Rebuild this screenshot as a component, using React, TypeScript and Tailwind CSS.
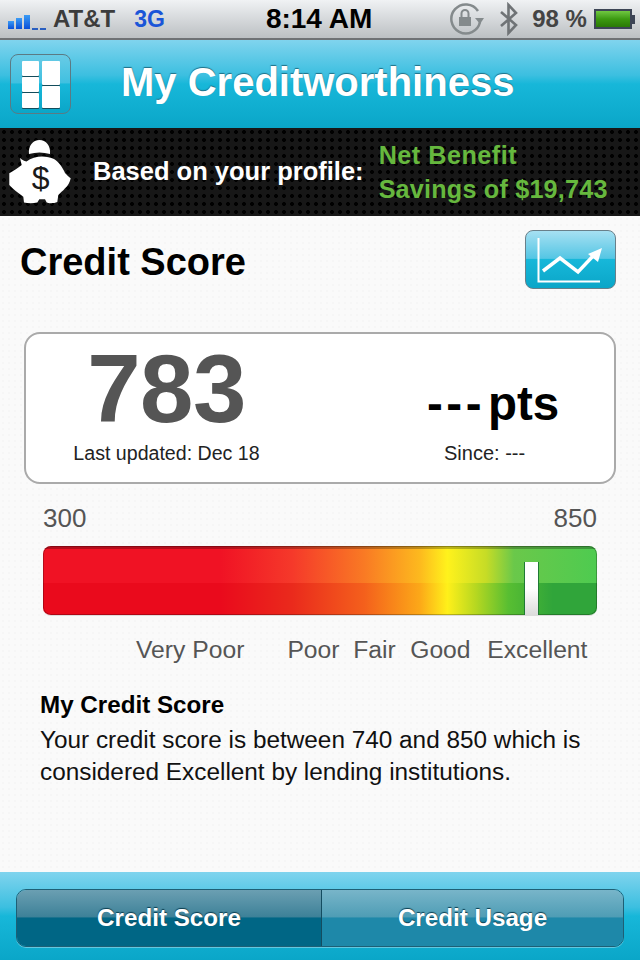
import React from "react";

const Pig = () => (
  <svg width="66" height="72" viewBox="0 0 66 72" className="shrink-0">
    <path d="M21 22 C20 14 25 8 31.500 8 C38 8 43 14 42 22 C35 20 28 20 21 22 Z" fill="#fff" />
    <path d="M12 26 C14 28 16 29 18.500 29.500 C26 23.500 38 23 46 27 C51 30 55 36 57 41 C59 43 61 45 62.700 46.300 C62 50 60 54 57 56.300 C55 59 52 61 50.300 63 L49.300 70 C46 71.500 41 71.500 38.700 70.500 L37 67.300 L31.300 67.300 L29.300 70.500 C25 71.500 20 71.500 16 70.500 L15.300 64.700 C10 61 5 57 1.300 53 L1.300 41.300 C5 39 10 36 13.700 33 Z" fill="#fff" />
    <text x="32.700" y="57" textAnchor="middle" fontSize="32" fontFamily="Liberation Sans, sans-serif" fill="#1a1a1a">$</text>
  </svg>
);

export default function App() {
  return (
    <div className="w-[640px] h-[960px] flex flex-col overflow-hidden font-['Liberation_Sans',Arial,sans-serif] bg-[#f9f9f9]">
      {/* Status bar */}
      <div className="h-[40px] shrink-0 flex items-center bg-gradient-to-b from-[#f0f2f4] to-[#bcc0c3] border-b-2 border-[#6f7275] pl-2 pr-1 text-[#3c3c3c] relative">
        <svg width="40" height="22" viewBox="0 0 40 22" className="shrink-0">
          <defs>
            <linearGradient id="sig" x1="0" y1="0" x2="0" y2="1">
              <stop offset="0" stopColor="#3b9cf5" />
              <stop offset="1" stopColor="#0a4fd8" />
            </linearGradient>
          </defs>
          <rect x="0" y="13" width="6" height="8" fill="url(#sig)" />
          <rect x="8" y="10" width="6" height="11" fill="url(#sig)" />
          <rect x="16" y="7" width="6" height="14" fill="url(#sig)" />
          <rect x="24" y="20" width="6" height="2" fill="#2a5fc0" />
          <rect x="32" y="20" width="6" height="2" fill="#2a5fc0" />
        </svg>
        <span className="ml-[5px] text-[24px] font-bold leading-none">AT&amp;T</span>
        <span className="ml-[19px] text-[23px] font-bold leading-none text-[#1a55d8]">3G</span>
        <span className="ml-[101px] text-[28px] font-bold leading-none text-black">8:14 AM</span>
        <svg width="36" height="34" viewBox="0 0 36 34" className="ml-[77px] shrink-0" fill="none">
          <path d="M29 9 A14.5 14.5 0 1 0 31 20" stroke="#848a8c" strokeWidth="2.5" />
          <path d="M26 16 L35 16 L31 22 Z" fill="#848a8c" />
          <rect x="10" y="15" width="12" height="9" fill="#848a8c" />
          <path d="M12.500 15 V11.500 a3.500 3.500 0 0 1 7 0 V15" stroke="#848a8c" strokeWidth="2" />
        </svg>
        <svg width="20" height="34" viewBox="0 0 20 34" className="ml-[14px] shrink-0" fill="none">
          <path d="M2 10 L17 23 L9.500 31 V3 L17 11 L2 24" stroke="#6f7376" strokeWidth="2.600" />
        </svg>
        <span className="ml-[13px] text-[24px] font-bold leading-none text-[#444]">98 %</span>
        <div className="ml-[7px] w-[38px] h-[20px] border-2 border-[#3d4556] bg-gradient-to-b from-[#70c840] via-[#3c9a10] to-[#2a7a06] shrink-0" />
        <div className="w-[3px] h-[9px] bg-[#3d4556] shrink-0" />
      </div>

      {/* Nav */}
      <div className="h-[88px] shrink-0 flex items-center bg-[linear-gradient(#80d4ee_0%,#3cbfe0_40%,#17b7d9_50%,#0aa6c8_100%)] pl-[10px]">
        <div className="w-[61px] h-[60px] rounded-[8px] border border-[#5b7a84] flex gap-[3px] items-center justify-center bg-[linear-gradient(#68cbe6_0%,#40c0e0_48%,#17b7d9_50%,#0aa6c8_100%)]">
          <div className="flex flex-col gap-[1px]">
            <div className="w-[17px] h-[15px] bg-white rounded-[1px] shadow-[0_1px_0_#134d5c]" />
            <div className="w-[17px] h-[15px] bg-white rounded-[1px] shadow-[0_1px_0_#134d5c]" />
            <div className="w-[17px] h-[15px] bg-white rounded-[1px] shadow-[0_1px_0_#134d5c]" />
          </div>
          <div className="flex flex-col gap-[1px]">
            <div className="w-[18px] h-[24px] bg-white rounded-[1px] shadow-[0_1px_0_#134d5c]" />
            <div className="w-[18px] h-[22px] bg-white rounded-[1px] shadow-[0_1px_0_#134d5c]" />
          </div>
        </div>
        <div className="ml-[50px] text-[40px] font-bold text-white leading-none -mt-[4px] [text-shadow:0_-1px_1px_#1f6e85]">My Creditworthiness</div>
      </div>

      {/* Banner */}
      <div className="h-[88px] shrink-0 flex items-center pl-[8px] bg-[#171717] bg-[radial-gradient(circle_at_center,#000_1.8px,transparent_2.2px)] bg-[length:8px_8px]">
        <div className="-mt-[8px]"><Pig /></div>
        <span className="ml-[19px] text-[25.5px] font-bold text-white leading-none">Based on your profile:</span>
        <div className="ml-[15px] text-[25.2px] font-bold text-[#66b83e] leading-[34px] tracking-[0.2px]">
          <div className="tracking-[0.5px]">Net Benefit</div>
          <div>Savings of $19,743</div>
        </div>
      </div>

      {/* Content */}
      <div className="flex-1 flex flex-col bg-[#fafafa] bg-[radial-gradient(#f6f6f6_0.8px,transparent_1px)] bg-[length:6px_6px]">
        <div className="flex items-start justify-between pl-[20px] pr-[24px] pt-[14px]">
          <h1 className="text-[38px] font-bold text-black leading-none mt-[13px]">Credit Score</h1>
          <div className="w-[91px] h-[59px] rounded-[8px] border border-[#69808a] bg-[linear-gradient(#a6e0f2_0%,#55c6e4_48%,#17b7d9_50%,#0aa6c8_100%)]">
            <svg width="89" height="57" viewBox="0 0 89 57" fill="none">
              <path d="M12.500 7 V50.500 H74" stroke="#fff" strokeWidth="2" />
              <path d="M17 40 L34 27 L52 41 L68 24" stroke="#fff" strokeWidth="3.500" />
              <path d="M76 17 L62 23 L72 31 Z" fill="#fff" />
            </svg>
          </div>
        </div>

        <div className="mx-[24px] mt-[43px] h-[152px] rounded-[16px] border-2 border-[#aaa] bg-white flex">
          <div className="w-[281px] flex flex-col items-center">
            <div className="text-[96px] font-bold text-[#555] leading-none mt-[7px] tracking-[-0.5px]">783</div>
            <div className="text-[19.6px] text-[#222] leading-none mt-[7px]">Last updated: Dec 18</div>
          </div>
          <div className="flex-1 flex flex-col items-start pl-[120px]">
            <div className="text-[47.5px] font-bold text-black leading-none mt-[46px]">
              <span className="tracking-[3.5px]">---</span>
              <span className="ml-[3px]">pts</span>
            </div>
            <div className="text-[20px] text-[#222] leading-none mt-[15px] ml-[17px]">Since: ---</div>
          </div>
        </div>

        <div className="flex justify-between mx-[43px] mt-[21px] text-[26px] leading-none text-[#555]">
          <span>300</span>
          <span>850</span>
        </div>

        <div className="mx-[43px] mt-[15px] h-[70px] relative rounded-[8px] overflow-hidden flex flex-col border-b border-[#ddd]">
          <div className="h-[37px] bg-[linear-gradient(90deg,#f01224_0%,#f01224_32%,#f5392a_45%,#f97a24_58%,#fdb91e_68%,#fff21c_73%,#c6dc26_80%,#6ac84a_85%,#4ecb50_100%)]" />
          <div className="flex-1 bg-[linear-gradient(90deg,#ea0a1c_0%,#ea0a1c_32%,#ea2a1c_45%,#f4601c_58%,#fca818_68%,#fff01a_73%,#b8d820_78%,#58be32_84%,#30a53a_92%,#30a53a_100%)]" />
          <div className="absolute inset-0 rounded-[8px] shadow-[inset_0_0_0_1px_rgba(0,0,0,0.25)]" />
          <div className="absolute inset-x-0 top-0 h-[3px] bg-black/25" />
          <div className="absolute left-[481px] top-[16px] bottom-0 w-[15px] border-x border-[#1f7a35] bg-gradient-to-b from-white via-white to-[#dcdcdc]" />
        </div>

        <div className="flex mt-[22px] text-[24.7px] leading-none text-[#555] pl-[136px]">
          <span>Very Poor</span>
          <span className="ml-[43px]">Poor</span>
          <span className="ml-[13.6px]">Fair</span>
          <span className="ml-[14.5px]">Good</span>
          <span className="ml-[16.7px]">Excellent</span>
        </div>

        <div className="mx-[40px] mt-[30px]">
          <div className="text-[24.2px] font-bold text-black leading-none">My Credit Score</div>
          <p className="mt-[7px] text-[24.35px] text-[#111] leading-[32px]">Your credit score is between 740 and 850 which is considered Excellent by lending institutions.</p>
        </div>
      </div>

      {/* Tab bar */}
      <div className="h-[88px] shrink-0 flex items-start justify-center pt-[17px] bg-[linear-gradient(#80d4ee_0%,#3cbfe0_40%,#17b7d9_50%,#0aa6c8_100%)]">
        <div className="w-[608px] h-[58px] rounded-[10px] border border-[#1e5f75] flex overflow-hidden shadow-[0_1px_0_#62c8e0]">
          <div className="w-[305px] flex items-center justify-center text-[24.2px] font-bold text-white bg-[linear-gradient(#6b9fb2_0%,#3d8198_48%,#006685_50%,#006685_100%)] border-r border-[#144c60] [text-shadow:0_-1px_1px_#0b3d4f]">Credit Score</div>
          <div className="flex-1 flex items-center justify-center text-[24.2px] font-bold text-white bg-[linear-gradient(#78b5c9_0%,#4f9db5_48%,#1e88a9_50%,#1e88a9_100%)] [text-shadow:0_-1px_1px_#0b3d4f]">Credit Usage</div>
        </div>
      </div>
    </div>
  );
}
